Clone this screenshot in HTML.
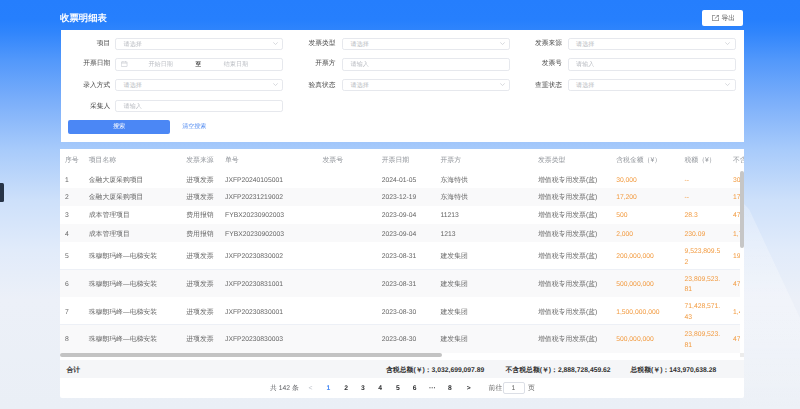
<!DOCTYPE html>
<html><head><meta charset="utf-8"><style>
*{box-sizing:border-box;margin:0;padding:0}
html,body{width:800px;height:409px;overflow:hidden}
body{position:relative;font-family:"Liberation Sans",sans-serif;color:#606266;text-rendering:geometricPrecision;
background:linear-gradient(180deg,rgb(37,126,253) 0px,rgb(38,127,253) 20px,rgb(48,133,252) 32px,rgb(82,152,251) 60px,rgb(122,174,250) 100px,rgb(168,203,251) 150px,rgb(205,224,250) 200px,rgb(225,235,250) 250px,rgb(236,240,248) 300px,rgb(234,239,246) 409px);}
#root{position:absolute;left:0;top:0;width:800px;height:409px;transform:translateZ(0)}
.a{position:absolute;white-space:nowrap}
.tab{left:0;top:183.2px;width:3.9px;height:19.2px;background:#273447;border-radius:0 1.5px 1.5px 0}
.title{left:60px;top:12.2px;font-size:9.4px;font-weight:bold;color:#fff;line-height:12px}
.export{left:702.2px;top:10.2px;width:41.3px;height:15.6px;background:#fff;border-radius:2px}
.panel{left:60.6px;top:29.5px;width:683.4px;height:112.1px;background:#fff}
.lbl{font-size:6.75px;line-height:8px;color:#4a4a4a;text-align:right}
.inp{height:12.4px;border:0.6px solid #e6e8ed;border-radius:2.2px;background:#fff}
.ph{font-size:6.1px;line-height:7px;color:#b9bcc2}
.arrow{width:3.2px;height:3.2px;border-right:0.6px solid #bfc2c8;border-bottom:0.6px solid #bfc2c8;transform:rotate(45deg)}
.btn{left:68.2px;top:120px;width:101.8px;height:14px;background:#4b87f5;border-radius:2px;color:#fff;font-size:6.2px;line-height:14px;text-align:center}
.link{left:182.3px;top:123px;font-size:6.0px;line-height:8px;color:#4a86f0}
.tpanel{left:60px;top:148.9px;width:684px;height:249px;background:#fff;overflow:hidden;border-radius:0 0 2px 2px}
.c{position:absolute;font-size:6.77px;line-height:8px;white-space:nowrap;color:#666}
.z{font-size:6.85px}
.hd{color:#8f9399}
.org{color:#f29a3f}
.stripe{position:absolute;left:0;width:684px;background:#f9f9fa}
</style></head><body>
<div id="root">
<svg class="a" style="left:0;top:0" width="800" height="409"><defs><linearGradient id="bg1" x1="0" y1="0" x2="0" y2="1"><stop offset="0" stop-color="#fff" stop-opacity="0.25"/><stop offset="0.5" stop-color="#fff" stop-opacity="0.3"/><stop offset="1" stop-color="#fff" stop-opacity="0.15"/></linearGradient></defs><polygon points="740,200 749,209 800,318 800,409 740,409" fill="url(#bg1)"/></svg>
<div class="a tab"></div>
<div class="a title">收票明细表</div>
<div class="a export"><svg style="position:absolute;left:9.8px;top:4.8px" width="7" height="6" viewBox="0 0 7 6"><path d="M3.2 0.3H0.3V5.7H6.7V2.6" fill="none" stroke="#555" stroke-width="0.65"/><path d="M2.8 3.6L6.4 0.4M4.7 0.3H6.7V2.2" fill="none" stroke="#555" stroke-width="0.65"/></svg><span class="a" style="left:19.4px;top:5.2px;font-size:6.75px;line-height:8px;color:#555">导出</span></div>
<div class="a panel"></div>
<div class="a lbl" style="right:689.80px;top:40.40px">项目</div>
<div class="a inp" style="left:115.2px;top:37.50px;width:167.9px;height:12.4px"></div>
<div class="a ph" style="left:123.60px;top:41.00px">请选择</div>
<svg class="a" style="left:272.90px;top:42.10px" width="5" height="3" viewBox="0 0 5 3"><path d="M0.3 0.4L2.5 2.5L4.7 0.4" fill="none" stroke="#b8bbc2" stroke-width="0.55"/></svg>
<div class="a lbl" style="right:464.40px;top:40.40px">发票类型</div>
<div class="a inp" style="left:342.2px;top:37.50px;width:167.9px;height:12.4px"></div>
<div class="a ph" style="left:350.60px;top:41.00px">请选择</div>
<svg class="a" style="left:499.90px;top:42.10px" width="5" height="3" viewBox="0 0 5 3"><path d="M0.3 0.4L2.5 2.5L4.7 0.4" fill="none" stroke="#b8bbc2" stroke-width="0.55"/></svg>
<div class="a lbl" style="right:238.10px;top:40.40px">发票来源</div>
<div class="a inp" style="left:567.7px;top:37.50px;width:167.9px;height:12.4px"></div>
<div class="a ph" style="left:576.10px;top:41.00px">请选择</div>
<svg class="a" style="left:725.40px;top:42.10px" width="5" height="3" viewBox="0 0 5 3"><path d="M0.3 0.4L2.5 2.5L4.7 0.4" fill="none" stroke="#b8bbc2" stroke-width="0.55"/></svg>
<div class="a lbl" style="right:689.80px;top:60.40px">开票日期</div>
<div class="a inp" style="left:115.2px;top:57.50px;width:167.9px;height:13.0px"></div>
<svg class="a" style="left:121.20px;top:60.80px" width="6.4" height="5.8" viewBox="0 0 6.4 5.8"><rect x="0.3" y="0.9" width="5.8" height="4.6" rx="0.3" fill="none" stroke="#bfc3ca" stroke-width="0.55"/><path d="M0.3 2.1h5.8M1.9 0.1v1.3M4.5 0.1v1.3" stroke="#bfc3ca" stroke-width="0.55"/></svg>
<div class="a ph" style="left:148.50px;top:61.00px">开始日期</div>
<div class="a lbl" style="left:195.50px;top:60.80px;font-size:5.6px;font-weight:bold;color:#444">至</div>
<div class="a ph" style="left:223.70px;top:61.00px">结束日期</div>
<div class="a lbl" style="right:464.40px;top:60.40px">开票方</div>
<div class="a inp" style="left:342.2px;top:57.50px;width:167.9px;height:13.0px"></div>
<div class="a ph" style="left:350.60px;top:61.00px">请输入</div>
<div class="a lbl" style="right:238.10px;top:60.40px">发票号</div>
<div class="a inp" style="left:567.7px;top:57.50px;width:167.9px;height:13.0px"></div>
<div class="a ph" style="left:576.10px;top:61.00px">请输入</div>
<div class="a lbl" style="right:689.80px;top:81.50px">录入方式</div>
<div class="a inp" style="left:115.2px;top:78.60px;width:167.9px;height:12.4px"></div>
<div class="a ph" style="left:123.60px;top:82.10px">请选择</div>
<svg class="a" style="left:272.90px;top:83.20px" width="5" height="3" viewBox="0 0 5 3"><path d="M0.3 0.4L2.5 2.5L4.7 0.4" fill="none" stroke="#b8bbc2" stroke-width="0.55"/></svg>
<div class="a lbl" style="right:464.40px;top:81.50px">验真状态</div>
<div class="a inp" style="left:342.2px;top:78.60px;width:167.9px;height:12.4px"></div>
<div class="a ph" style="left:350.60px;top:82.10px">请选择</div>
<svg class="a" style="left:499.90px;top:83.20px" width="5" height="3" viewBox="0 0 5 3"><path d="M0.3 0.4L2.5 2.5L4.7 0.4" fill="none" stroke="#b8bbc2" stroke-width="0.55"/></svg>
<div class="a lbl" style="right:238.10px;top:81.50px">查重状态</div>
<div class="a inp" style="left:567.7px;top:78.60px;width:167.9px;height:12.4px"></div>
<div class="a ph" style="left:576.10px;top:82.10px">请选择</div>
<svg class="a" style="left:725.40px;top:83.20px" width="5" height="3" viewBox="0 0 5 3"><path d="M0.3 0.4L2.5 2.5L4.7 0.4" fill="none" stroke="#b8bbc2" stroke-width="0.55"/></svg>
<div class="a lbl" style="right:689.80px;top:102.80px">采集人</div>
<div class="a inp" style="left:115.2px;top:99.90px;width:167.9px;height:12.4px"></div>
<div class="a ph" style="left:123.60px;top:103.40px">请输入</div>
<div class="a btn">搜索</div>
<div class="a link">清空搜索</div>
<div class="a tpanel">
<div class="c hd" style="left:5px;top:8.00px"><span class="z">序号</span></div>
<div class="c hd" style="left:28.7px;top:8.00px"><span class="z">项目名称</span></div>
<div class="c hd" style="left:126.2px;top:8.00px"><span class="z">发票来源</span></div>
<div class="c hd" style="left:165px;top:8.00px"><span class="z">单号</span></div>
<div class="c hd" style="left:262.5px;top:8.00px"><span class="z">发票号</span></div>
<div class="c hd" style="left:321.7px;top:8.00px"><span class="z">开票日期</span></div>
<div class="c hd" style="left:380.5px;top:8.00px"><span class="z">开票方</span></div>
<div class="c hd" style="left:478px;top:8.00px"><span class="z">发票类型</span></div>
<div class="c hd" style="left:556.2px;top:8.00px"><span class="z">含税金额（</span>¥<span class="z">）</span></div>
<div class="c hd" style="left:624.5px;top:8.00px"><span class="z">税额（</span>¥<span class="z">）</span></div>
<div class="c hd" style="left:673px;top:8.00px"><span class="z">不含税金额（</span>¥<span class="z">）</span></div>
<div class="a" style="left:0;top:21.10px;width:679.6px;height:182.90px;overflow:hidden">
<div class="c" style="left:5px;top:6.70px">1</div>
<div class="c" style="left:28.7px;top:6.70px"><span class="z">金融大厦采购项目</span></div>
<div class="c" style="left:126.2px;top:6.70px"><span class="z">进项发票</span></div>
<div class="c" style="left:165px;top:6.70px">JXFP20240105001</div>
<div class="c" style="left:262.5px;top:6.70px"></div>
<div class="c" style="left:321.7px;top:6.70px">2024-01-05</div>
<div class="c" style="left:380.5px;top:6.70px"><span class="z">东海特供</span></div>
<div class="c" style="left:478px;top:6.70px"><span class="z">增值税专用发票</span>(<span class="z">蓝</span>)</div>
<div class="c org" style="left:556.2px;top:6.70px">30,000</div>
<div class="c org" style="left:624.5px;top:6.70px">--</div>
<div class="c org" style="left:673px;top:6.70px">30,000</div>
<div class="stripe" style="top:18.00px;height:17.60px"></div>
<div class="c" style="left:5px;top:24.50px">2</div>
<div class="c" style="left:28.7px;top:24.50px"><span class="z">金融大厦采购项目</span></div>
<div class="c" style="left:126.2px;top:24.50px"><span class="z">进项发票</span></div>
<div class="c" style="left:165px;top:24.50px">JXFP20231219002</div>
<div class="c" style="left:262.5px;top:24.50px"></div>
<div class="c" style="left:321.7px;top:24.50px">2023-12-19</div>
<div class="c" style="left:380.5px;top:24.50px"><span class="z">东海特供</span></div>
<div class="c" style="left:478px;top:24.50px"><span class="z">增值税专用发票</span>(<span class="z">蓝</span>)</div>
<div class="c org" style="left:556.2px;top:24.50px">17,200</div>
<div class="c org" style="left:624.5px;top:24.50px">--</div>
<div class="c org" style="left:673px;top:24.50px">17,200</div>
<div class="c" style="left:5px;top:42.45px">3</div>
<div class="c" style="left:28.7px;top:42.45px"><span class="z">成本管理项目</span></div>
<div class="c" style="left:126.2px;top:42.45px"><span class="z">费用报销</span></div>
<div class="c" style="left:165px;top:42.45px">FYBX20230902003</div>
<div class="c" style="left:262.5px;top:42.45px"></div>
<div class="c" style="left:321.7px;top:42.45px">2023-09-04</div>
<div class="c" style="left:380.5px;top:42.45px">11213</div>
<div class="c" style="left:478px;top:42.45px"><span class="z">增值税专用发票</span>(<span class="z">蓝</span>)</div>
<div class="c org" style="left:556.2px;top:42.45px">500</div>
<div class="c org" style="left:624.5px;top:42.45px">28.3</div>
<div class="c org" style="left:673px;top:42.45px">471.7</div>
<div class="stripe" style="top:53.90px;height:18.00px"></div>
<div class="c" style="left:5px;top:60.60px">4</div>
<div class="c" style="left:28.7px;top:60.60px"><span class="z">成本管理项目</span></div>
<div class="c" style="left:126.2px;top:60.60px"><span class="z">费用报销</span></div>
<div class="c" style="left:165px;top:60.60px">FYBX20230902003</div>
<div class="c" style="left:262.5px;top:60.60px"></div>
<div class="c" style="left:321.7px;top:60.60px">2023-09-04</div>
<div class="c" style="left:380.5px;top:60.60px">1213</div>
<div class="c" style="left:478px;top:60.60px"><span class="z">增值税专用发票</span>(<span class="z">蓝</span>)</div>
<div class="c org" style="left:556.2px;top:60.60px">2,000</div>
<div class="c org" style="left:624.5px;top:60.60px">230.09</div>
<div class="c org" style="left:673px;top:60.60px">1,769.91</div>
<div class="c" style="left:5px;top:83.30px">5</div>
<div class="c" style="left:28.7px;top:83.30px"><span class="z">珠穆朗玛峰</span>—<span class="z">电梯安装</span></div>
<div class="c" style="left:126.2px;top:83.30px"><span class="z">进项发票</span></div>
<div class="c" style="left:165px;top:83.30px">JXFP20230830002</div>
<div class="c" style="left:262.5px;top:83.30px"></div>
<div class="c" style="left:321.7px;top:83.30px">2023-08-31</div>
<div class="c" style="left:380.5px;top:83.30px"><span class="z">建发集团</span></div>
<div class="c" style="left:478px;top:83.30px"><span class="z">增值税专用发票</span>(<span class="z">蓝</span>)</div>
<div class="c org" style="left:556.2px;top:83.30px">200,000,000</div>
<div class="c org" style="left:624.5px;top:77.90px">9,523,809.5</div>
<div class="c org" style="left:624.5px;top:88.70px">2</div>
<div class="c org" style="left:673px;top:83.30px">190,476,190.48</div>
<div class="stripe" style="top:99.30px;height:28.20px"></div>
<div class="a" style="left:0;top:99.00px;width:680px;height:0.7px;background:#edf0f6"></div>
<div class="c" style="left:5px;top:111.10px">6</div>
<div class="c" style="left:28.7px;top:111.10px"><span class="z">珠穆朗玛峰</span>—<span class="z">电梯安装</span></div>
<div class="c" style="left:126.2px;top:111.10px"><span class="z">进项发票</span></div>
<div class="c" style="left:165px;top:111.10px">JXFP20230831001</div>
<div class="c" style="left:262.5px;top:111.10px"></div>
<div class="c" style="left:321.7px;top:111.10px">2023-08-31</div>
<div class="c" style="left:380.5px;top:111.10px"><span class="z">建发集团</span></div>
<div class="c" style="left:478px;top:111.10px"><span class="z">增值税专用发票</span>(<span class="z">蓝</span>)</div>
<div class="c org" style="left:556.2px;top:111.10px">500,000,000</div>
<div class="c org" style="left:624.5px;top:105.70px">23,809,523.</div>
<div class="c org" style="left:624.5px;top:116.50px">81</div>
<div class="c org" style="left:673px;top:111.10px">476,190,476.19</div>
<div class="c" style="left:5px;top:138.60px">7</div>
<div class="c" style="left:28.7px;top:138.60px"><span class="z">珠穆朗玛峰</span>—<span class="z">电梯安装</span></div>
<div class="c" style="left:126.2px;top:138.60px"><span class="z">进项发票</span></div>
<div class="c" style="left:165px;top:138.60px">JXFP20230830001</div>
<div class="c" style="left:262.5px;top:138.60px"></div>
<div class="c" style="left:321.7px;top:138.60px">2023-08-30</div>
<div class="c" style="left:380.5px;top:138.60px"><span class="z">建发集团</span></div>
<div class="c" style="left:478px;top:138.60px"><span class="z">增值税专用发票</span>(<span class="z">蓝</span>)</div>
<div class="c org" style="left:556.2px;top:138.60px">1,500,000,000</div>
<div class="c org" style="left:624.5px;top:133.20px">71,428,571.</div>
<div class="c org" style="left:624.5px;top:144.00px">43</div>
<div class="c org" style="left:673px;top:138.60px">1,428,571,428.57</div>
<div class="stripe" style="top:154.30px;height:28.60px"></div>
<div class="a" style="left:0;top:154.00px;width:680px;height:0.7px;background:#edf0f6"></div>
<div class="c" style="left:5px;top:166.30px">8</div>
<div class="c" style="left:28.7px;top:166.30px"><span class="z">珠穆朗玛峰</span>—<span class="z">电梯安装</span></div>
<div class="c" style="left:126.2px;top:166.30px"><span class="z">进项发票</span></div>
<div class="c" style="left:165px;top:166.30px">JXFP20230830003</div>
<div class="c" style="left:262.5px;top:166.30px"></div>
<div class="c" style="left:321.7px;top:166.30px">2023-08-30</div>
<div class="c" style="left:380.5px;top:166.30px"><span class="z">建发集团</span></div>
<div class="c" style="left:478px;top:166.30px"><span class="z">增值税专用发票</span>(<span class="z">蓝</span>)</div>
<div class="c org" style="left:556.2px;top:166.30px">500,000,000</div>
<div class="c org" style="left:624.5px;top:160.90px">23,809,523.</div>
<div class="c org" style="left:624.5px;top:171.70px">81</div>
<div class="c org" style="left:673px;top:166.30px">476,190,476.19</div>
</div>
<div class="a" style="left:680.2px;top:21.80px;width:3.7px;height:77.5px;background:#c6c6c6;border-radius:2px"></div>
<div class="a" style="left:680px;top:204.00px;width:4px;height:4.4px;background:#ececec"></div>
<div class="a" style="left:0;top:204.00px;width:381.6px;height:4.2px;background:#c3c3c3;border-radius:2px"></div>
<div class="a" style="left:0;top:211.60px;width:684px;height:17.9px;background:#f5f6f8"></div>
<div class="c" style="left:6.5px;top:218.10px;font-weight:bold;color:#333"><span class="z">合计</span></div>
<div class="c" style="left:326px;top:218.10px;font-weight:bold;color:#333"><span class="z">含税总额</span>(<span class="z">￥</span>)<span class="z">：</span>3,032,699,097.89</div>
<div class="c" style="left:445.5px;top:218.10px;font-weight:bold;color:#333"><span class="z">不含税总额</span>(<span class="z">￥</span>)<span class="z">：</span>2,888,728,459.62</div>
<div class="c" style="left:570.5px;top:218.10px;font-weight:bold;color:#333"><span class="z">总税额</span>(<span class="z">￥</span>)<span class="z">：</span>143,970,638.28</div>
<div class="c" style="left:210px;top:236.30px;color:#606266"><span class="z">共</span> 142 <span class="z">条</span></div>
<div class="c" style="left:248.6px;top:236.30px;color:#b4b8c0">&lt;</div>
<div class="c" style="left:266.6px;top:236.30px;color:#4a8cf6;font-weight:bold">1</div>
<div class="c" style="left:284.2px;top:236.30px;color:#303133;font-weight:bold">2</div>
<div class="c" style="left:301.1px;top:236.30px;color:#303133;font-weight:bold">3</div>
<div class="c" style="left:318.3px;top:236.30px;color:#303133;font-weight:bold">4</div>
<div class="c" style="left:336px;top:236.30px;color:#303133;font-weight:bold">5</div>
<div class="c" style="left:352.8px;top:236.30px;color:#303133;font-weight:bold">6</div>
<div class="c" style="left:369.1px;top:236.30px;color:#303133;font-weight:bold">···</div>
<div class="c" style="left:388.1px;top:236.30px;color:#303133;font-weight:bold">8</div>
<div class="c" style="left:406.7px;top:236.30px;color:#303133;font-weight:bold">&gt;</div>
<div class="c" style="left:428.6px;top:236.30px"><span class="z">前往</span></div>
<div class="a" style="left:442.5px;top:233.00px;width:22px;height:12.3px;border:0.6px solid #dcdfe6;border-radius:2px"></div>
<div class="c" style="left:451.5px;top:236.30px">1</div>
<div class="c" style="left:468px;top:236.30px"><span class="z">页</span></div>
</div>
</div>
</body></html>
